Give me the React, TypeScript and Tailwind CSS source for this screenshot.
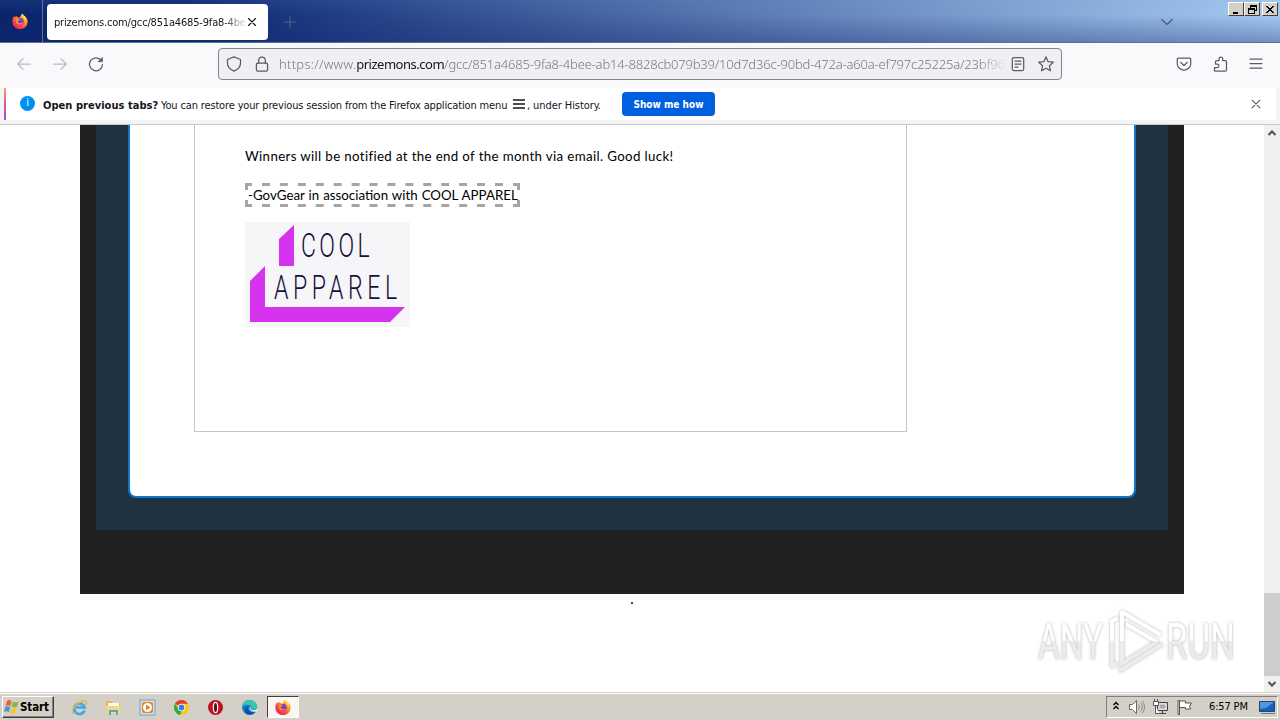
import type { ReactNode } from "react";
import { clsx } from "clsx";

const UI_FONT = "font-['DejaVu_Sans_Condensed','DejaVu_Sans',sans-serif]";

function FirefoxIcon({ size = 16 }: { size?: number }) {
  return (
    <svg width={size} height={size} viewBox="0 0 16 16" className="shrink-0">
      <defs>
        <linearGradient id="fox" x1="1" y1="0" x2="0.2" y2="1">
          <stop offset="0" stopColor="#fff04a" />
          <stop offset="0.4" stopColor="#ff9a20" />
          <stop offset="0.75" stopColor="#ff3b45" />
          <stop offset="1" stopColor="#e0236f" />
        </linearGradient>
      </defs>
      <path
        d="M10.200.2c.3 1.300 1 2 2 2.800 2.100 1.500 3.600 3.300 3.400 6A7.600 7.200 0 0 1 .4 9C.2 6.600 1 4.700 2.400 2.800l.5 1.500L4.600 3l.8 1.300 2.400.1C8.600 2.800 9.300 2 10.200.2z"
        fill="url(#fox)"
      />
      <circle cx="8.200" cy="8.400" r="3.500" fill="#7a3fd0" />
      <path d="M4 5.800c1.400-.6 2.800-.2 4 .8-1 .2-1 1-2.200 1.300.2 2.500 3.400 3.200 5.700 1-1 3.300-6.300 3.600-7.500.3-.5-1.200-.4-2.400 0-3.400z" fill="#ff8a28" />
      <path d="M10.200.4c-.6 2 .3 3.200 1.500 4.300 1.200 1.200 1.400 2.600.9 4.100 2-1.900 1.700-4.300.2-5.700C11.500 2 10.500 1.300 10.200.4z" fill="#ffe045" />
    </svg>
  );
}

function LineIcon({
  children,
  size = 16,
  className,
}: {
  children: ReactNode;
  size?: number;
  className?: string;
}) {
  return (
    <svg
      width={size}
      height={size}
      viewBox="0 0 16 16"
      fill="none"
      stroke="currentColor"
      strokeWidth="1.25"
      strokeLinecap="round"
      strokeLinejoin="round"
      className={clsx("shrink-0", className)}
    >
      {children}
    </svg>
  );
}

function CaptionButton({ children }: { children: ReactNode }) {
  return (
    <div className="flex h-[14px] w-4 items-center justify-center border border-t-white border-r-[#404040] border-b-[#404040] border-l-white bg-[#d4d0c8]">
      <svg width="12" height="11" viewBox="0 0 12 11" fill="none" stroke="#000" shapeRendering="crispEdges">
        {children}
      </svg>
    </div>
  );
}

function TabStrip() {
  return (
    <div className="flex h-[43px] border-b border-[#5b6f9c] bg-[linear-gradient(to_bottom,rgba(120,165,225,0.1),rgba(0,20,90,0)_35%,rgba(20,40,110,0.35)),linear-gradient(to_right,#0a246a,#0c2874_15%,#a6caf0)]">
      <div className="flex w-[42px] items-center pl-3">
        <FirefoxIcon />
      </div>
      <div className="w-px bg-[#5c6f9f]" />
      <div className="mt-1 ml-1 flex h-9 w-[221px] items-center rounded-[4px] bg-white pl-[7px]">
        <div className="mt-[2px] w-[191px] text-[11px] leading-4 tracking-[-0.17px] whitespace-nowrap text-[#15141a] [mask-image:linear-gradient(to_right,#000_168px,transparent_194px)]">
          prizemons.com/gcc/851a4685-9fa8-4be
        </div>
        <LineIcon size={14} className="text-[#15141a]">
          <path d="M4 4l8 8M12 4l-8 8" />
        </LineIcon>
      </div>
      <LineIcon size={16} className="mt-[14px] ml-[14px] text-[#4b5c7d]">
        <path d="M8 2.500v11M2.500 8h11" />
      </LineIcon>
      <LineIcon size={16} className="mt-[14px] mr-[1px] ml-auto text-[#4a6391]">
        <path d="M2.800 5.500L8 10.500l5.200-5" strokeWidth="1.500" />
      </LineIcon>
      <div className="mt-[2px] mr-[2px] ml-[52px] flex">
        <CaptionButton>
          <path d="M3 8.500h5" strokeWidth="2" />
        </CaptionButton>
        <CaptionButton>
          <path d="M4 3.500V1.500h6v5H8M4 2h6M2 4.500h6v5H2zM2 5h6" />
        </CaptionButton>
        <div className="w-[2px]" />
        <CaptionButton>
          <path d="M2.500 2l7 7M9.500 2l-7 7" strokeWidth="1.700" />
        </CaptionButton>
      </div>
    </div>
  );
}

function NavBar() {
  return (
    <div className="flex h-[45px] items-center bg-[#f9f9fb] pb-[3px] text-[#5b5b66]">
      <LineIcon className="ml-4 text-[#bcbcc1]">
        <path d="M14.500 8H2M7 2.800L1.700 8 7 13.200" />
      </LineIcon>
      <LineIcon className="ml-5 text-[#bcbcc1]">
        <path d="M1.500 8H14M9 2.800L14.300 8 9 13.200" />
      </LineIcon>
      <LineIcon className="ml-5">
        <path d="M13.300 4.500A6.500 6.500 0 1 0 14.500 8.500" />
        <path d="M14.500 1.500v4.300h-4.300z" fill="currentColor" strokeWidth="0.600" />
      </LineIcon>
      <div className="ml-[114px] flex h-8 w-[844px] items-center rounded-[4px] border border-[#84848b] bg-[#f0f0f4] pl-[7px]">
        <LineIcon>
          <path d="M8 .9L14.500 3.500v3.800c0 3.500-2.500 6.200-6.500 7.800-4-1.600-6.500-4.300-6.500-7.800V3.500z" />
        </LineIcon>
        <LineIcon className="ml-3">
          <rect x="2.400" y="7" width="11.200" height="8" rx="1.300" />
          <path d="M4.700 7V4.300a3.300 3.300 0 0 1 6.600 0V7" />
        </LineIcon>
        <div className="ml-[9px] w-[726px] font-['Noto_Sans',sans-serif] text-[13px] leading-5 font-light tracking-[-0.19px] whitespace-nowrap text-[#77777f] [mask-image:linear-gradient(to_right,#000_698px,transparent_728px)]">
          <span className="tracking-[0.26px]">https://www.</span>
          <span className="font-normal tracking-[-0.48px] text-[#15141a]">prizemons.com</span>
          <span>/gcc/851a4685-9fa8-4bee-ab14-8828cb079b39/10d7d36c-90bd-472a-a60a-ef797c25225a/23bf96</span>
        </div>
        <LineIcon className="ml-[5px]">
          <rect x="2.300" y="1.500" width="11.400" height="13" rx="1.500" />
          <path d="M5 5h6M5 8h6M5 11h3" />
        </LineIcon>
        <LineIcon className="ml-3">
          <path d="M8 .9l2.100 4.800 5.200.5-3.900 3.500 1.100 5.100L8 12.200l-4.500 2.600 1.100-5.100L.7 6.200l5.200-.5z" />
        </LineIcon>
      </div>
      <LineIcon className="ml-[114px]">
        <path d="M2.500 2h11c.8 0 1.200.5 1.200 1.200v4A6.500 6.200 0 0 1 8 14a6.500 6.200 0 0 1-6.700-6.800v-4C1.300 2.500 1.700 2 2.500 2zM4.800 6.500L8 9.500l3.200-3" />
      </LineIcon>
      <LineIcon className="ml-5">
        <path d="M3.500 15.200h9.800c.8 0 1.200-.4 1.200-1.200V5.800c0-.8-.4-1.200-1.200-1.200h-2.600V2.800a1.800 1.800 0 0 0-3.600 0v1.800H4.700c-.8 0-1.200.4-1.200 1.200V8h1.700a1.800 1.800 0 0 1 0 3.600H2.500v2.600c0 .6.400 1 1 1z" />
      </LineIcon>
      <LineIcon className="ml-5">
        <path d="M2 3h12M2 7.500h12M2 12h12" />
      </LineIcon>
    </div>
  );
}

function RestoreNotice() {
  return (
    <div className="h-[37px] border-b border-[#c8c8ca] bg-[#f4f4f5] px-1">
      <div className="flex h-8 items-center bg-white text-[11px] text-[#15141a]">
        <div className="h-8 w-[2px] bg-linear-to-b from-[#f79a63] via-[#e0509b] to-[#9059d0]" />
        <div className="mb-[1px] ml-[14px] flex size-[15px] items-center justify-center rounded-full bg-[#0090ed] text-[11px] text-white">
          i
        </div>
        <div className="mt-[5px] ml-2 w-[115px] font-bold tracking-[0.04px] whitespace-nowrap">Open previous tabs?</div>
        <div className="mt-[5px] ml-[3px] w-[348px] tracking-[-0.15px] whitespace-nowrap">
          You can restore your previous session from the Firefox application menu
        </div>
        <svg width="12" height="12" viewBox="0 0 12 12" stroke="currentColor" strokeWidth="1.300" className="ml-1">
          <path d="M0 2h12M0 6h12M0 10h12" />
        </svg>
        <div className="mt-[5px] ml-[2px] w-[77px] tracking-[-0.08px] whitespace-nowrap">, under History.</div>
        <div className="ml-[18px] flex h-6 w-[93px] items-center justify-center rounded-[4px] bg-[#0061e0] text-[10px] font-bold text-white">
          Show me how
        </div>
        <LineIcon size={14} className="mr-[13px] ml-auto text-[#5b5b66]">
          <path d="M3.500 3.500l9 9M12.500 3.500l-9 9" />
        </LineIcon>
      </div>
    </div>
  );
}

function ApparelLogo() {
  return (
    <svg width="165" height="105" viewBox="0 0 165 105" className="bg-[#f6f6f8]">
      <path d="M34 17L49 3v41H34zM5 59l15-15v41h140l-15 15H5z" fill="#d633ee" />
      <g fill="#15103f" fontFamily="'Roboto', sans-serif" fontWeight="300" fontSize="33">
        <text transform="translate(56 35) scale(.7 1)" textLength="98">COOL</text>
        <text transform="translate(29 76.500) scale(.7 1)" textLength="176">APPAREL</text>
      </g>
    </svg>
  );
}

// Dashed frame around the signature line: corners are always closed
function DashedFrame() {
  return (
    <svg
      width="275"
      height="24"
      viewBox="0 0 275 24"
      fill="none"
      stroke="#a5a5a5"
      strokeWidth="3"
      className="absolute inset-0"
    >
      <path d="M17 1.500h241M17 22.500h241" strokeDasharray="8 9.920" />
      <path d="M1.500 7V1.500H7M268 1.500h5.500V7M1.500 17v5.500H7M268 22.500h5.500V17" />
    </svg>
  );
}

function Page() {
  return (
    <div className="flex h-[567px] flex-1 flex-col items-center overflow-hidden bg-white">
      <div className="h-[469px] w-[1104px] shrink-0 bg-[#212121] px-4">
        <div className="h-[405px] bg-[#1e3242] px-8">
          <div className="h-[373px] rounded-b-[8px] border-x-2 border-b-2 border-[#0f75c8] bg-white pl-16">
            <div className="h-[307px] w-[713px] border-x border-b border-[#c4c4c4] pt-[22px] pl-[50px] font-['Lato',sans-serif] text-[13.3px] leading-[19px] text-black">
              <p className="tracking-[0.35px] whitespace-nowrap">
                Winners will be notified at the end of the month via email. Good luck!
              </p>
              <div className="relative mt-[17px] h-6 w-[275px] p-[3px]">
                <DashedFrame />
                <p className="leading-[18px] [word-spacing:0.6px] whitespace-nowrap">
                  -GovGear in association with COOL APPAREL
                </p>
              </div>
              <div className="mt-[15px]">
                <ApparelLogo />
              </div>
            </div>
          </div>
        </div>
      </div>
      <div className="mt-2 size-[2px] bg-[#444]" />
    </div>
  );
}

function Scrollbar() {
  return (
    <div className="flex w-4 flex-col items-center bg-[#f0f0f0] text-[#505050]">
      <svg width="16" height="16" viewBox="0 0 16 16" fill="none" stroke="currentColor" strokeWidth="2">
        <path d="M4.500 10L8 6.500l3.500 3.500" />
      </svg>
      <div className="mt-[452px] h-[83px] w-4 bg-[#cdcdcd]" />
      <svg width="16" height="16" viewBox="0 0 16 16" fill="none" stroke="currentColor" strokeWidth="2">
        <path d="M4.500 6L8 9.500 11.500 6" />
      </svg>
    </div>
  );
}

function Watermark() {
  return (
    <svg
      width="240"
      height="76"
      viewBox="0 0 240 76"
      className="absolute top-[605px] left-[1030px] [filter:drop-shadow(0_0_1.500px_#b4b4b4)]"
    >
      <defs>
        <linearGradient id="mark" gradientUnits="userSpaceOnUse" x1="0" y1="0" x2="0" y2="72">
          <stop offset="0.5" stopColor="#fff" />
          <stop offset="0.5" stopColor="#ececec" />
        </linearGradient>
      </defs>
      <g fill="url(#mark)" fontFamily="'Roboto', sans-serif" fontWeight="400" fontSize="50">
        <text x="8" y="54" textLength="65" lengthAdjust="spacingAndGlyphs">ANY</text>
        <text x="136" y="54" textLength="69" lengthAdjust="spacingAndGlyphs">RUN</text>
      </g>
      <g fill="none" stroke="url(#mark)" strokeWidth="4" strokeLinejoin="round">
        <path d="M88 13l-6 3v45l5-3" />
        <path d="M92 59V7l39 23" />
        <path d="M96 19l31 18-37 23" />
        <path d="M89 66l43-27" />
      </g>
    </svg>
  );
}

function QuickLaunch() {
  return (
    <div className="ml-[17px] flex items-center gap-[17px]">
      <svg width="17" height="17" viewBox="0 0 17 17" fill="none">
        <path d="M13.500 11.500A5.300 5.300 0 1 1 13.600 8.500H5" stroke="#3da9e8" strokeWidth="2.700" />
        <path d="M2 15C-1 13 4 4 12 2c4-1 4.500 1 3 4" stroke="#edb82f" strokeWidth="1.300" />
      </svg>
      <svg width="17" height="17" viewBox="0 0 17 17">
        <path d="M1 2h6l1 2h7v11H1z" fill="#d9b860" />
        <path d="M3 4h11v4H3z" fill="#fffbe0" />
        <path d="M1 7h15v8H1z" fill="#f0d788" />
        <path d="M4 16v-5h9v5h-2v-3H6v3z" fill="#4fa8d8" />
      </svg>
      <svg width="17" height="17" viewBox="0 0 17 17">
        <rect x="1" y="1" width="15" height="15" fill="#c9e2f3" stroke="#64a3cc" />
        <rect x="3" y="3" width="11" height="11" rx="2" fill="#ef8416" />
        <circle cx="8.500" cy="8.500" r="4.500" fill="#fff" />
        <path d="M7 5.800L11.500 8.500 7 11.200z" fill="#ef7a10" />
      </svg>
      <svg width="17" height="17" viewBox="0 0 17 17">
        <circle cx="8.500" cy="8.500" r="7.500" fill="#f8c818" />
        <path d="M8.500 8.500L2 4.700a7.500 7.500 0 0 1 13 .1H8.500z" fill="#e33b2e" />
        <path d="M2 4.700l3.400 5.500 3.100 2L7 15.900A7.500 7.500 0 0 1 2 4.700z" fill="#2da94f" />
        <circle cx="8.500" cy="8.500" r="3.700" fill="#fff" />
        <circle cx="8.500" cy="8.500" r="2.900" fill="#3d7ce8" />
      </svg>
      <svg width="17" height="17" viewBox="0 0 17 17">
        <circle cx="8.500" cy="8.500" r="7.500" fill="#bd1321" />
        <ellipse cx="8.500" cy="8.500" rx="2.200" ry="5.200" fill="#65101a" stroke="#fff" strokeWidth="1.200" />
      </svg>
      <svg width="17" height="17" viewBox="0 0 17 17">
        <circle cx="8.500" cy="8.500" r="7.500" fill="#1676c8" />
        <path d="M1 8C1 3 5 1 8.500 1 13 1 16 4 16 7.500c0 3-3 4-6 3 1-1 1-3-1-4-3-1.500-6-.5-8 1.500z" fill="#38c4b1" />
        <path d="M7 8c-1 3 1 6 7.500 5C10 18 3 15 4 10c.5-2 2-2.500 3-2z" fill="#0b4f9d" />
        <path d="M9 7.500c1.500 1 .2 2.200 1 3 1.500 1.300 5 .8 6-1l.5 2.500c-4 1.500-8 .5-8-2.500z" fill="#e5f2f5" />
      </svg>
    </div>
  );
}

function Tray() {
  return (
    <div className="ml-auto flex h-[22px] w-[172px] items-center border border-t-[#808080] border-r-white border-b-white border-l-[#808080]">
      <svg width="8" height="10" viewBox="0 0 8 10" fill="none" stroke="#000" strokeWidth="1.300" className="mb-[2px] ml-[5px]">
        <path d="M1.500 4L4 1.500 6.500 4M1.500 8L4 5.500 6.500 8" />
      </svg>
      <svg width="18" height="16" viewBox="0 0 18 16" className="ml-2">
        <path d="M1.500 5.500h3l4-4v13l-4-4h-3z" fill="#fff" stroke="#666" />
        <path d="M10.500 5.500q2 2.500 0 5M12.500 3.500q3.500 4.500 0 9M14.500 2q4 6 0 12" fill="none" stroke="#888" />
      </svg>
      <svg width="17" height="16" viewBox="0 0 17 16" className="ml-[6px]">
        <path d="M5.500 3.500h10v8h-10zM7 14.500h7M10.500 12v2" fill="#ccc" stroke="#444" />
        <path d="M7 5h7v5H7z" fill="#aaa" stroke="#eee" />
        <path d="M1.500 2.500h5v4h-5zM2.500 0v2M5.500 0v2M3.500 7v7.500h4" fill="#fff" stroke="#555" />
      </svg>
      <svg width="17" height="16" viewBox="0 0 17 16" className="ml-[7px]" fill="#fff" stroke="#555">
        <path d="M2 1.500h1.500v14H2z" />
        <path d="M3.500 2h6v2h6l-2 3 1 3h-5V8.500h-6z" />
      </svg>
      <div className="mt-px ml-4 w-[42px] text-[11px] tracking-[-0.15px] whitespace-nowrap">6:57 PM</div>
      <svg width="17" height="16" viewBox="0 0 17 16" className="ml-[8px]">
        <path d="M.5 2.500h15v10H.5z" fill="#1760ba" stroke="#244475" />
        <path d="M1 3h14L7 9 1 10z" fill="#4d98df" />
        <path d="M2 14.500h14" stroke="#777" />
      </svg>
    </div>
  );
}

function Taskbar() {
  return (
    <div className="h-7 bg-[#d4d0c8] pt-px">
      <div className="flex h-[27px] items-center border-t border-white pr-[2px] pl-[2px]">
        <div className="flex h-[22px] w-[52px] items-center border border-t-white border-r-[#404040] border-b-[#404040] border-l-white text-[11px] font-bold shadow-[inset_-1px_-1px_#808080]">
          <svg width="17" height="16" viewBox="0 0 17 16" className="shrink-0">
            <path d="M4 2q2-2 4.500 0L7.500 7Q5 5.500 2.500 7z" fill="#ea6030" />
            <path d="M9.500 2.500q3 1.500 6 0L14 8q-3 1-5.500-.5z" fill="#8dba3b" />
            <path d="M2.200 8q2.500-1.500 5 0L6 13q-2.500-1.500-5 0z" fill="#4c92d6" />
            <path d="M8.200 8.700q3 1.300 5.500.3l-1.500 5q-2.500 1.500-5.200-.5z" fill="#f6c334" />
          </svg>
          <span className="mt-px text-[11.5px] tracking-[-0.1px]">Start</span>
        </div>
        <QuickLaunch />
        <div className="ml-[9px] flex h-[22px] w-8 items-center justify-center border border-t-[#404040] border-r-white border-b-white border-l-[#404040] bg-[#f8f7f5]">
          <FirefoxIcon />
        </div>
        <Tray />
      </div>
    </div>
  );
}

export default function App() {
  return (
    <div className={clsx("relative h-[720px] w-[1280px] overflow-hidden bg-white text-black", UI_FONT)}>
      <TabStrip />
      <NavBar />
      <RestoreNotice />
      <div className="flex h-[567px]">
        <Page />
        <Scrollbar />
      </div>
      <Taskbar />
      <Watermark />
    </div>
  );
}
